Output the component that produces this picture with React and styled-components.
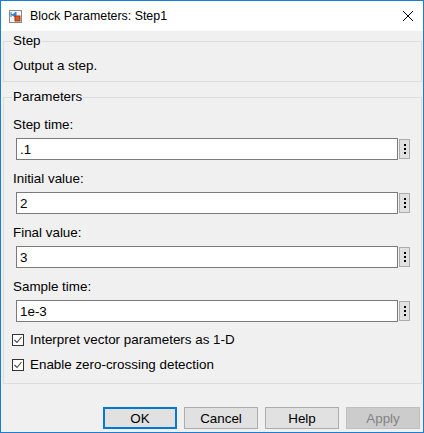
import styled, { createGlobalStyle } from 'styled-components'

const GlobalStyle = createGlobalStyle`
  body {
    margin: 0;
    font-family: 'Liberation Sans', Arial, sans-serif;
    font-size: 13.4px;
    color: #000;
  }
`

const font = `'Liberation Sans', Arial, sans-serif`

const Window = styled.div`
  width: 424px;
  height: 433px;
  box-sizing: border-box;
  border: 1px solid #1a7fd4;
  background: #f0f0f0;
  display: flex;
  flex-direction: column;
  font-family: ${font};
  font-size: 13.4px;
`

const TitleBar = styled.div`
  height: 30px;
  flex: none;
  background: #ffffff;
  display: flex;
  align-items: center;
  padding: 0 9px 0 8px;
`

const TitleText = styled.span`
  margin-left: 8px;
  font-size: 12.4px;
  line-height: 16px;
`

const CloseButton = styled.div`
  margin-left: auto;
  width: 12px;
  height: 12px;
  display: flex;
`

const Group = styled.fieldset`
  margin: ${({ $mt = 0 }) => $mt}px 1px 0 2px;
  padding: 0 8px ${({ $pb = 0 }) => $pb}px;
  border: 1px solid #dcdcdc;
  min-width: 0;
`

const Legend = styled.legend`
  padding: 0 1px;
  line-height: 16px;
`

const Description = styled.div`
  margin-top: 9px;
  line-height: 16px;
  padding-left: 1px;
`

const Fields = styled.div`
  margin-top: 12px;
  display: flex;
  flex-direction: column;
  gap: 11px;
`

const Field = styled.div`
  display: flex;
  flex-direction: column;
  gap: 5px;
`

const Label = styled.label`
  line-height: 16px;
  padding-left: 1px;
`

const InputRow = styled.div`
  display: flex;
  align-items: center;
  gap: 1px;
  margin: 0 3px 0 4px;
`

const TextInput = styled.input`
  flex: 1;
  min-width: 0;
  height: 22px;
  box-sizing: border-box;
  border: 1px solid #7a7a7a;
  background: #ffffff;
  padding: 0 3px;
  font-family: ${font};
  font-size: 13.4px;
  color: #000;
  outline: none;
`

const MoreButton = styled.div`
  width: 11px;
  height: 20px;
  box-sizing: border-box;
  border: 1px solid #adadad;
  background: #e1e1e1;
  display: flex;
  flex-direction: column;
  align-items: center;
  justify-content: center;
  gap: 2px;
  flex: none;
`

const Dot = styled.span`
  width: 2px;
  height: 2px;
  background: #000;
`

const Checks = styled.div`
  margin-top: 10px;
  display: flex;
  flex-direction: column;
  gap: 9px;
`

const CheckRow = styled.div`
  display: flex;
  align-items: center;
  gap: 6px;
  line-height: 16px;
`

const Box = styled.span`
  width: 12px;
  height: 12px;
  box-sizing: border-box;
  border: 1px solid #333333;
  background: #ffffff;
  display: flex;
  flex: none;
`

const ButtonBar = styled.div`
  margin-top: 23px;
  display: flex;
  justify-content: flex-end;
  gap: 7px;
  padding-right: 3px;
`

const Button = styled.button`
  width: 74px;
  height: 22px;
  box-sizing: border-box;
  padding: 0;
  font-family: ${font};
  font-size: 13.4px;
  color: ${({ disabled }) => (disabled ? '#838383' : '#000000')};
  background: ${({ disabled }) => (disabled ? '#cccccc' : '#e1e1e1')};
  border: ${({ $default, disabled }) =>
    $default ? '2px solid #0078d7' : disabled ? '1px solid #bfbfbf' : '1px solid #adadad'};
`

function BlockIcon() {
  return (
    <svg width="13" height="13" viewBox="0 0 13 13">
      <rect x="0.5" y="0.5" width="12" height="12" fill="#f4f4f4" stroke="#8a8a8a" />
      <path d="M2 2v5M2 4.5h2l3-2.5v5z" fill="#2f86d6" stroke="#2f86d6" strokeWidth="1" />
      <rect x="6" y="6" width="5" height="5" fill="#e05a1c" stroke="#9a3510" strokeWidth="1" />
    </svg>
  )
}

function CloseIcon() {
  return (
    <svg width="12" height="12" viewBox="0 0 12 12">
      <path d="M1 1L11 11M11 1L1 11" stroke="#000" strokeWidth="1" />
    </svg>
  )
}

function Check() {
  return (
    <svg width="10" height="10" viewBox="0 0 10 10">
      <path d="M1.5 5L4 7.5L8.5 2" fill="none" stroke="#444" strokeWidth="1.1" />
    </svg>
  )
}

const params = [
  { label: 'Step time:', value: '.1' },
  { label: 'Initial value:', value: '2' },
  { label: 'Final value:', value: '3' },
  { label: 'Sample time:', value: '1e-3' },
]

const options = ['Interpret vector parameters as 1-D', 'Enable zero-crossing detection']

export default function App() {
  return (
    <>
      <GlobalStyle />
      <Window>
        <TitleBar>
          <BlockIcon />
          <TitleText>Block Parameters: Step1</TitleText>
          <CloseButton>
            <CloseIcon />
          </CloseButton>
        </TitleBar>

        <Group $mt={2} $pb={7}>
          <Legend>Step</Legend>
          <Description>Output a step.</Description>
        </Group>

        <Group $mt={7} $pb={10}>
          <Legend>Parameters</Legend>
          <Fields>
            {params.map((p) => (
              <Field key={p.label}>
                <Label>{p.label}</Label>
                <InputRow>
                  <TextInput defaultValue={p.value} />
                  <MoreButton>
                    <Dot />
                    <Dot />
                    <Dot />
                  </MoreButton>
                </InputRow>
              </Field>
            ))}
          </Fields>
          <Checks>
            {options.map((o) => (
              <CheckRow key={o}>
                <Box>
                  <Check />
                </Box>
                {o}
              </CheckRow>
            ))}
          </Checks>
        </Group>

        <ButtonBar>
          <Button $default>OK</Button>
          <Button>Cancel</Button>
          <Button>Help</Button>
          <Button disabled>Apply</Button>
        </ButtonBar>
      </Window>
    </>
  )
}
